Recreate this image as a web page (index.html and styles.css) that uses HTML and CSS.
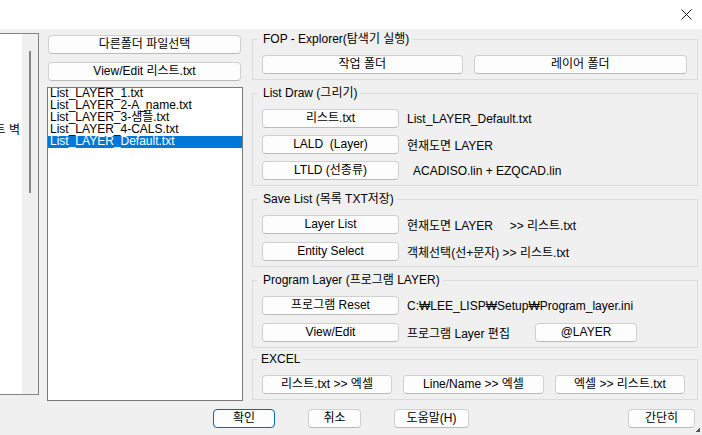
FILE: index.html
```html
<!DOCTYPE html>
<html lang="ko">
<head>
    <meta charset="UTF-8">
    <title>Layer List</title>
    <link rel="stylesheet" href="styles.css">
</head>
<body>
    <div class="titlebar">
        <svg class="close" width="11" height="11" viewBox="0 0 11 11">
            <path d="M0.5 0.5 L10.5 10.5 M10.5 0.5 L0.5 10.5" stroke="#1a1a1a" stroke-width="1" fill="none"/>
        </svg>
    </div>

    <div class="main">
        <div class="side">
            <div class="side-view"><span>리스트 벽</span></div>
            <div class="side-scroll"><div class="thumb"></div></div>
        </div>

        <div class="files">
            <button class="btn wide">다른폴더 파일선택</button>
            <button class="btn wide second">View/Edit 리스트.txt</button>
            <ul class="listbox">
                <li>List_LAYER_1.txt</li>
                <li>List_LAYER_2-A_name.txt</li>
                <li>List_LAYER_3-샘플.txt</li>
                <li>List_LAYER_4-CALS.txt</li>
                <li class="selected">List_LAYER_Default.txt</li>
            </ul>
        </div>

        <div class="groups">
            <fieldset class="group">
                <legend>FOP - Explorer(탐색기 실행)</legend>
                <div class="row">
                    <button class="btn work">작업 폴더</button>
                    <button class="btn layer">레이어 폴더</button>
                </div>
            </fieldset>

            <fieldset class="group dense">
                <legend>List Draw (그리기)</legend>
                <div class="row">
                    <button class="btn cmd">리스트.txt</button>
                    <span class="note">List_LAYER_Default.txt</span>
                </div>
                <div class="row">
                    <button class="btn cmd">LALD&nbsp; (Layer)</button>
                    <span class="note">현재도면 LAYER</span>
                </div>
                <div class="row">
                    <button class="btn cmd">LTLD (선종류)</button>
                    <span class="note indent">ACADISO.lin + EZQCAD.lin</span>
                </div>
            </fieldset>

            <fieldset class="group">
                <legend>Save List (목록 TXT저장)</legend>
                <div class="row">
                    <button class="btn cmd">Layer List</button>
                    <span class="note">현재도면 LAYER     &gt;&gt; 리스트.txt</span>
                </div>
                <div class="row">
                    <button class="btn cmd">Entity Select</button>
                    <span class="note">객체선택(선+문자) &gt;&gt; 리스트.txt</span>
                </div>
            </fieldset>

            <fieldset class="group">
                <legend>Program Layer (프로그램 LAYER)</legend>
                <div class="row">
                    <button class="btn cmd">프로그램 Reset</button>
                    <span class="note">C:₩LEE_LISP₩Setup₩Program_layer.ini</span>
                </div>
                <div class="row">
                    <button class="btn cmd">View/Edit</button>
                    <span class="note fixed">프로그램 Layer 편집</span>
                    <button class="btn at">@LAYER</button>
                </div>
            </fieldset>

            <fieldset class="group excel">
                <legend>EXCEL</legend>
                <div class="row">
                    <button class="btn xl">리스트.txt &gt;&gt; 엑셀</button>
                    <button class="btn xl mid">Line/Name &gt;&gt; 엑셀</button>
                    <button class="btn xl">엑셀 &gt;&gt; 리스트.txt</button>
                </div>
            </fieldset>
        </div>
    </div>

    <div class="footer">
        <button class="btn ok">확인</button>
        <button class="btn cancel">취소</button>
        <button class="btn help">도움말(H)</button>
        <button class="btn brief">간단히</button>
    </div>

    <svg class="grip" width="4" height="4" viewBox="0 0 4 4">
        <rect x="3" y="0" width="1" height="1" fill="#555"/>
        <rect x="2" y="1" width="2" height="1" fill="#555"/>
        <rect x="1" y="2" width="3" height="1" fill="#555"/>
        <rect x="0" y="3" width="4" height="1" fill="#555"/>
    </svg>
</body>
</html>
```

FILE: styles.css
```css
body {
    margin: 0;
    width: 702px;
    height: 435px;
    overflow: hidden;
    position: relative;
    background: #f0f0f0;
    color: #000;
    font-family: "Liberation Sans", "Noto Sans CJK KR", sans-serif;
    font-size: 12px;
}
.titlebar {
    height: 29px;
    background: #fff;
    display: flex;
    justify-content: flex-end;
    align-items: flex-start;
    padding: 9px 10px 0 0;
    box-sizing: border-box;
}
.main {
    display: flex;
    align-items: flex-start;
    height: 372px;
}

/* left panel (cut off by the window edge) */
.side {
    margin-top: 4px;
    width: 39px;
    height: 362px;
    box-sizing: border-box;
    border: 1px solid #838383;
    border-left: none;
    display: flex;
}
.side-view {
    width: 22px;
    background: #fff;
    display: flex;
    justify-content: flex-end;
    align-items: flex-start;
    padding: 89px 2px 0 0;
    box-sizing: border-box;
    overflow: hidden;
    white-space: nowrap;
    line-height: 14px;
}
.side-scroll {
    width: 16px;
    padding: 17px 0 0 7px;
    box-sizing: border-box;
}
.thumb {
    width: 2px;
    height: 142px;
    background: #868686;
}

/* file list column */
.files {
    margin: 6px 0 0 8px;
    width: 196px;
    display: flex;
    flex-direction: column;
}
.listbox {
    list-style: none;
    margin: 6px 0 0;
    padding: 0;
    height: 314px;
    box-sizing: border-box;
    border: 1px solid #7a7a7a;
    background: #fff;
}
.listbox li {
    height: 12px;
    line-height: 10px;
    padding-left: 2px;
    white-space: nowrap;
}
.listbox li.selected {
    background: #0078d7;
    color: #fff;
}

/* buttons */
.btn {
    font: inherit;
    color: #000;
    height: 19px;
    padding: 0;
    line-height: 17px;
    box-sizing: border-box;
    background: #fdfdfd;
    border: 1px solid #d0d0d0;
    border-bottom-color: #bababa;
    border-radius: 4px;
    white-space: nowrap;
}
.btn.wide {
    width: 193px;
    margin-left: 1px;
}
.btn.second {
    margin-top: 8px;
}
.btn.work { width: 201px; }
.btn.layer { width: 214px; margin-left: 11px; }
.btn.cmd { width: 137px; }
.btn.at { width: 102px; }
.btn.xl { width: 130px; }
.btn.xl.mid { width: 141px; margin: 0 11px; }

/* group boxes */
.groups {
    margin: 4px 0 0 9px;
    width: 446px;
}
.group {
    margin: 0;
    padding: 10px 10px 5px 9px;
    border: 1px solid #dcdcdc;
    min-width: 0;
}
.group + .group {
    margin-top: 7px;
}
.group.excel {
    margin-top: 5px;
}
.group legend {
    height: 12px;
    line-height: 12px;
    padding: 0 3px 0 6px;
    margin-left: -5px;
    white-space: nowrap;
}
.group.excel legend {
    padding-left: 4px;
}
.row {
    display: flex;
    align-items: center;
}
.row + .row {
    margin-top: 8px;
}
.dense .row + .row {
    margin-top: 7px;
}
.note {
    margin-left: 8px;
    white-space: pre;
}
.note.indent {
    margin-left: 14px;
}
.note.fixed {
    width: 128px;
    flex: none;
}

/* dialog buttons */
.footer {
    display: flex;
    padding: 8px 7px 0 213px;
}
.btn.ok {
    width: 62px;
    border-color: #0067c0;
}
.btn.cancel {
    width: 53px;
    margin-left: 33px;
}
.btn.help {
    width: 75px;
    margin-left: 33px;
}
.btn.brief {
    width: 67px;
    margin-left: auto;
}
.grip {
    position: absolute;
    right: 2px;
    bottom: 3px;
}
```
